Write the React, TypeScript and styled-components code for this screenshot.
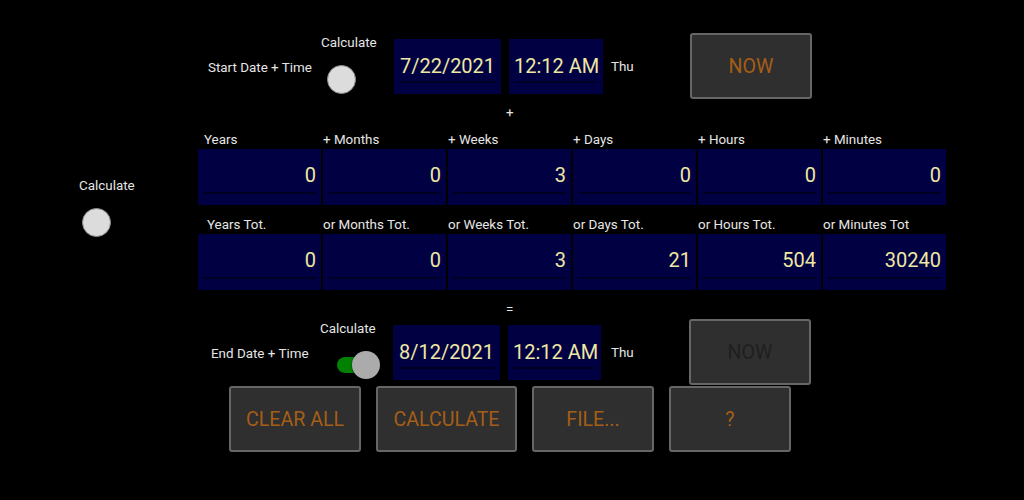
import React from "react";
import styled, { createGlobalStyle } from "styled-components";

const GlobalStyle = createGlobalStyle`
    html, body {
        margin: 0;
        padding: 0;
        background: #000;
    }
    body {
        font-family: Roboto, "Noto Sans", "Liberation Sans", sans-serif;
        color: #e6e6e6;
    }
`;

type Field = {
    label: string;
    value: string;
    indent?: number;
};

const deltas: Array<Field> = [
    { label: "Years", value: "0", indent: 6 },
    { label: "+ Months", value: "0" },
    { label: "+ Weeks", value: "3" },
    { label: "+ Days", value: "0" },
    { label: "+ Hours", value: "0" },
    { label: "+ Minutes", value: "0" },
];

const totals: Array<Field> = [
    { label: "Years Tot.", value: "0", indent: 9 },
    { label: "or Months Tot.", value: "0" },
    { label: "or Weeks Tot.", value: "3" },
    { label: "or Days Tot.", value: "21" },
    { label: "or Hours Tot.", value: "504" },
    { label: "or Minutes Tot", value: "30240" },
];

const actions = [
    { text: "CLEAR ALL", width: 132 },
    { text: "CALCULATE", width: 141 },
    { text: "FILE...", width: 122 },
    { text: "?", width: 122 },
];

const FieldGrid = ({ fields, labelHeight }: { fields: Array<Field>; labelHeight: number }) => (
    <Grid>
        {fields.map((f) => (
            <FieldLabel key={f.label} height={labelHeight} indent={f.indent || 0}>
                {f.label}
            </FieldLabel>
        ))}
        {fields.map((f) => (
            <ValueBox key={f.label + "-v"}>
                <ValueLine>{f.value}</ValueLine>
            </ValueBox>
        ))}
    </Grid>
);

const App = () => {
    return (
        <Page>
            <GlobalStyle />
            <LeftPanel>
                <SmallText>Calculate</SmallText>
                <Radio offset={3} />
            </LeftPanel>
            <Main>
                <DateRow>
                    <SideLabel indent={10} width={113}>
                        Start Date + Time
                    </SideLabel>
                    <CalcGroup>
                        <SmallText>Calculate</SmallText>
                        <Radio offset={6} />
                    </CalcGroup>
                    <DateBox width={107}>
                        <DateLine>7/22/2021</DateLine>
                    </DateBox>
                    <DateBox width={94}>
                        <DateLine>12:12 AM</DateLine>
                    </DateBox>
                    <DayLabel width={79}>Thu</DayLabel>
                    <Button width={122}>NOW</Button>
                </DateRow>
                <Operator height={24} top={6}>
                    +
                </Operator>
                <FieldGrid fields={deltas} labelHeight={26} />
                <FieldGrid fields={totals} labelHeight={29} />
                <Operator height={29} top={12}>
                    =
                </Operator>
                <DateRow>
                    <SideLabel indent={13} width={109}>
                        End Date + Time
                    </SideLabel>
                    <CalcGroup>
                        <SmallText>Calculate</SmallText>
                        <Toggle>
                            <ToggleTrack />
                            <ToggleThumb />
                        </Toggle>
                    </CalcGroup>
                    <DateBox width={107}>
                        <DateLine>8/12/2021</DateLine>
                    </DateBox>
                    <DateBox width={93}>
                        <DateLine>12:12 AM</DateLine>
                    </DateBox>
                    <DayLabel width={80} shift={2}>
                        Thu
                    </DayLabel>
                    <Button width={122} disabled>
                        NOW
                    </Button>
                </DateRow>
                <ActionRow>
                    {actions.map((a) => (
                        <Button key={a.text} width={a.width}>
                            {a.text}
                        </Button>
                    ))}
                </ActionRow>
            </Main>
        </Page>
    );
};

export default App;

const Page = styled.div`
    width: 1024px;
    height: 500px;
    background: #000;
    display: flex;
    overflow: hidden;
`;

const LeftPanel = styled.div`
    width: 119px;
    padding: 178px 0 0 79px;
    display: flex;
    flex-direction: column;
`;

const SmallText = styled.div`
    font-size: 13.4px;
    line-height: 16px;
    height: 16px;
    color: #e6e6e6;
    white-space: nowrap;
`;

const Radio = styled.div<{ offset: number }>`
    width: 27px;
    height: 27px;
    border-radius: 50%;
    background: #dcdcdc;
    border: 1px solid #8a8a8a;
    margin: 14px 0 0 ${(p) => p.offset}px;
`;

const Main = styled.div`
    width: 748px;
    padding-top: 33px;
    display: flex;
    flex-direction: column;
`;

const DateRow = styled.div`
    display: flex;
    align-items: center;
    height: 66px;
`;

const SideLabel = styled.div<{ indent: number; width: number }>`
    font-size: 13.4px;
    color: #e6e6e6;
    white-space: nowrap;
    margin-left: ${(p) => p.indent}px;
    width: ${(p) => p.width}px;
    padding-top: 2px;
`;

const CalcGroup = styled.div`
    width: 73px;
    align-self: stretch;
    padding-top: 2px;
    display: flex;
    flex-direction: column;
`;

const DateBox = styled.div<{ width: number }>`
    width: ${(p) => p.width}px;
    height: 55px;
    box-sizing: border-box;
    margin-right: 8px;
    background: #000042;
    padding: 0 5px 11px;
    display: flex;
    flex-direction: column;
    justify-content: flex-end;
`;

const DateLine = styled.div`
    height: 28px;
    line-height: 26px;
    font-size: 20px;
    color: #efe8a2;
    text-align: center;
    white-space: nowrap;
    border-bottom: 2px solid #000024;
`;

const DayLabel = styled.div<{ width: number; shift?: number }>`
    width: ${(p) => p.width}px;
    box-sizing: border-box;
    padding-left: ${(p) => p.shift || 0}px;
    font-size: 13.4px;
    color: #e6e6e6;
`;

const Button = styled.div<{ width: number; disabled?: boolean }>`
    width: ${(p) => p.width}px;
    height: 66px;
    box-sizing: border-box;
    background: #2f2f2f;
    border: 2px solid #666;
    border-radius: 3px;
    display: flex;
    align-items: center;
    justify-content: center;
    font-size: 19.6px;
    color: ${(p) => (p.disabled ? "#1f1f1f" : "#a55e16")};
`;

const Operator = styled.div<{ height: number; top: number }>`
    height: ${(p) => p.height}px;
    box-sizing: border-box;
    padding: ${(p) => p.top}px 0 0 308px;
    font-size: 13.4px;
    line-height: 16px;
    color: #e6e6e6;
`;

const Grid = styled.div`
    display: grid;
    grid-template-columns: repeat(6, 123px);
    column-gap: 2px;
`;

const FieldLabel = styled.div<{ height: number; indent: number }>`
    height: ${(p) => p.height}px;
    box-sizing: border-box;
    padding: 0 0 1px ${(p) => p.indent}px;
    display: flex;
    align-items: flex-end;
    font-size: 13.4px;
    line-height: 16px;
    color: #e6e6e6;
    white-space: nowrap;
`;

const ValueBox = styled.div`
    height: 56px;
    box-sizing: border-box;
    background: #000042;
    padding: 0 5px 11px;
    display: flex;
    flex-direction: column;
    justify-content: flex-end;
`;

const ValueLine = styled.div`
    height: 32px;
    line-height: 30px;
    font-size: 20px;
    color: #efe8a2;
    text-align: right;
    border-bottom: 2px solid #000024;
`;

const Toggle = styled.div`
    position: relative;
    width: 44px;
    height: 28px;
    margin: 14px 0 0 17px;
`;

const ToggleTrack = styled.div`
    position: absolute;
    left: 0;
    top: 6px;
    width: 34px;
    height: 16px;
    border-radius: 8px;
    background: #028002;
`;

const ToggleThumb = styled.div`
    position: absolute;
    left: 15px;
    top: 0;
    width: 28px;
    height: 28px;
    border-radius: 50%;
    background: #ababab;
    box-shadow: 0 1px 2px rgba(0, 0, 0, 0.6);
`;

const ActionRow = styled.div`
    display: flex;
    gap: 15px;
    margin: 1px 0 0 31px;
`;
